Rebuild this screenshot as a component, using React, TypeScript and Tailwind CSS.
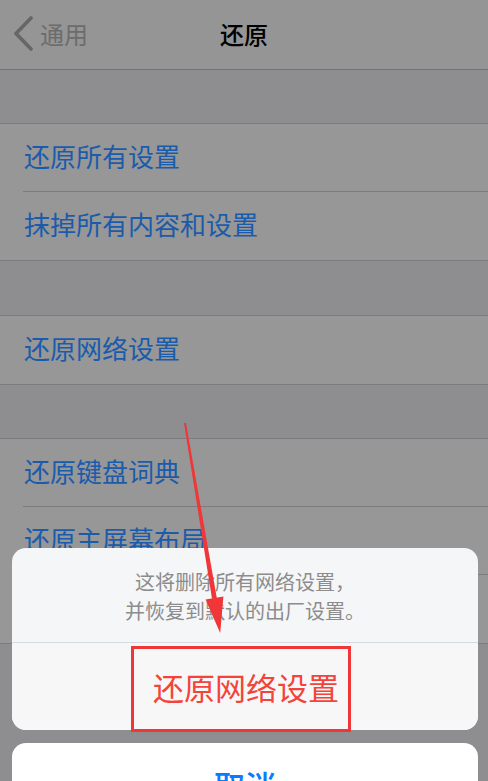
const font = { fontFamily: '"Noto Sans CJK SC", "Noto Sans", sans-serif' };

const Row = ({ label, inset }: { label: string; inset?: boolean }) => (
    <div className={`bg-[#979797] ${inset ? '' : 'border-b border-[#7c7c7c]'}`}>
        <div className={`ml-[23px] h-[68px] flex items-center pl-[1px] pb-[4px] ${inset ? 'border-b border-[#7c7c7c]' : 'h-[67px]'}`}>
            <span className="text-[26px] leading-none text-[#1b5bab]">{label}</span>
        </div>
    </div>
);

const Gap = ({ h }: { h: string }) => (
    <div className={`${h} bg-[#8e8e90] border-b border-[#7c7c7c]`} />
);

export default function App() {
    return (
        <div className="relative h-[781px] w-[488px] overflow-hidden bg-[#8e8e90]" style={font}>
            {/* nav bar */}
            <div className="h-[70px] bg-[#959596] border-b border-[#747474] flex items-center relative">
                <div className="flex items-center pl-[12px] pb-[2px]">
                    <svg width="24" height="36" viewBox="0 0 24 36" className="mr-[4px]">
                        <polyline points="19,2 4,17.5 19,33" fill="none" stroke="#666666" strokeWidth="3.6" strokeLinecap="round" strokeLinejoin="round" />
                    </svg>
                    <span className="text-[24px] leading-none text-[#6c6c6c]">通用</span>
                </div>
                <span className="absolute left-1/2 -translate-x-1/2 text-[24px] leading-none font-medium text-black pb-[2px]">还原</span>
            </div>

            <Gap h="h-[54px]" />
            <Row label="还原所有设置" inset />
            <Row label="抹掉所有内容和设置" />
            <Gap h="h-[55px]" />
            <Row label="还原网络设置" />
            <Gap h="h-[54px]" />
            <Row label="还原键盘词典" inset />
            <Row label="还原主屏幕布局" inset />
            <Row label="" />

            {/* action sheet */}
            <div className="absolute left-[12px] top-[548px] w-[466px] h-[182px] rounded-[14px] bg-[#f4f6f8] flex flex-col overflow-hidden">
                <div className="h-[95px] pt-[2px] border-b border-[#d5dae1] flex flex-col items-center justify-center text-[20px] leading-[29px] text-[#8c8c8c]">
                    <span>这将删除所有网络设置，</span>
                    <span>并恢复到默认的出厂设置。</span>
                </div>
                <div className="flex-1 bg-[#f7f7f8] flex items-center justify-center">
                    <span className="text-[31px] leading-none text-[#f4433a] pl-[2px]">还原网络设置</span>
                </div>
            </div>

            <div className="absolute left-[12px] top-[743px] w-[466px] h-[80px] rounded-[14px] bg-white flex justify-center pt-[26px]">
                <span className="text-[31px] leading-none font-medium text-[#0a7aff]">取消</span>
            </div>

            {/* annotation */}
            <div className="absolute left-[131px] top-[646px] w-[220px] h-[86px] border-[3px] border-[#f03636]" />
            <svg className="absolute inset-0 pointer-events-none" width="488" height="781" viewBox="0 0 488 781">
                <polygon points="184,423 186,423 216.8,598 212,598.8" fill="#f03636" />
                <polygon points="205.6,599.5 223.4,596.5 220.2,633" fill="#f03636" />
            </svg>
        </div>
    );
}
